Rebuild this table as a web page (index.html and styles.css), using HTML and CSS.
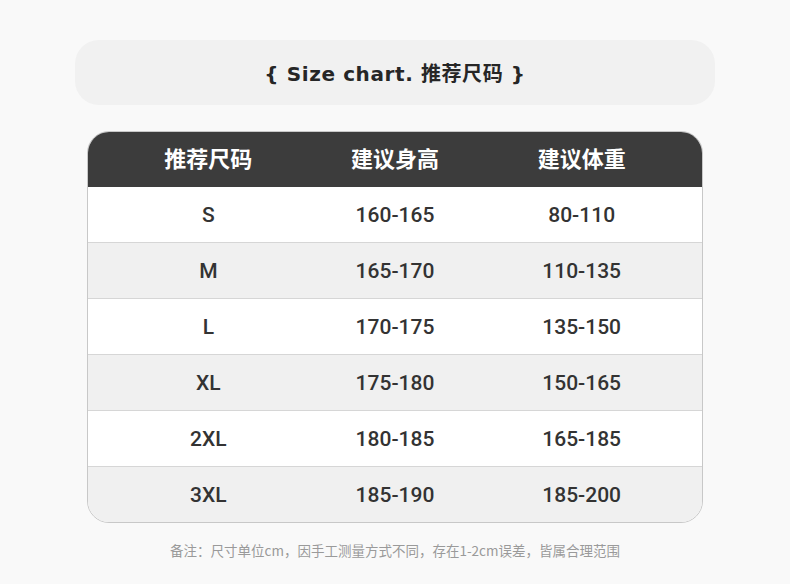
FILE: index.html
```html
<!DOCTYPE html>
<html lang="zh">
<head>
<meta charset="utf-8">
<title>Size chart</title>
<link rel="stylesheet" href="styles.css">
</head>
<body>
<div class="page">
  <div class="title-pill"><span class="title">{ Size chart. 推荐尺码 }</span></div>
  <div class="chart">
    <div class="row head">
      <div class="cell">推荐尺码</div>
      <div class="cell">建议身高</div>
      <div class="cell">建议体重</div>
    </div>
    <div class="row">
      <div class="cell">S</div><div class="cell">160-165</div><div class="cell">80-110</div>
    </div>
    <div class="row alt">
      <div class="cell">M</div><div class="cell">165-170</div><div class="cell">110-135</div>
    </div>
    <div class="row">
      <div class="cell">L</div><div class="cell">170-175</div><div class="cell">135-150</div>
    </div>
    <div class="row alt">
      <div class="cell">XL</div><div class="cell">175-180</div><div class="cell">150-165</div>
    </div>
    <div class="row">
      <div class="cell">2XL</div><div class="cell">180-185</div><div class="cell">165-185</div>
    </div>
    <div class="row alt last">
      <div class="cell">3XL</div><div class="cell">185-190</div><div class="cell">185-200</div>
    </div>
  </div>
  <p class="note">备注：尺寸单位cm，因手工测量方式不同，存在1-2cm误差，皆属合理范围</p>
</div>
</body>
</html>
```

FILE: styles.css
```css
html, body {
  margin: 0;
  padding: 0;
  background: #f9f9f9;
}
.page {
  width: 790px;
  height: 584px;
  padding-top: 40px;
  box-sizing: border-box;
  display: flex;
  flex-direction: column;
  align-items: center;
}
.title-pill {
  width: 640px;
  height: 65px;
  border-radius: 24px;
  background: #f1f1f1;
  display: flex;
  align-items: center;
  justify-content: center;
}
.title {
  font-family: "DejaVu Sans", "Noto Sans CJK SC", sans-serif;
  font-weight: bold;
  font-size: 20px;
  color: #262626;
  letter-spacing: 0.6px;
}
.chart {
  margin-top: 26px;
  width: 616px;
  border: 1px solid #c8c8c8;
  border-radius: 22px;
  overflow: hidden;
  box-sizing: border-box;
  background: #ffffff;
}
.row {
  display: grid;
  grid-template-columns: 1fr 1fr 1fr;
  padding: 0 27px;
  height: 55px;
  align-items: center;
  border-bottom: 1px solid #d6d6d6;
  background: #ffffff;
}
.row.alt {
  background: #f0f0f0;
}
.row.last {
  border-bottom: none;
}
.row.head {
  background: #3c3c3c;
  border-bottom: none;
  margin: -1px -1px 0;
  padding: 0 28px 4px;
  box-sizing: content-box;
  height: 52px;
}
.cell {
  text-align: center;
  font-family: Roboto, "Noto Sans CJK SC", sans-serif;
  font-weight: 500;
  font-size: 21px;
  color: #333333;
}
.head .cell {
  font-family: "Noto Sans CJK SC", sans-serif;
  font-weight: bold;
  font-size: 22px;
  color: #ffffff;
}
.note {
  margin: 17px 0 0;
  font-family: "Noto Sans CJK SC", sans-serif;
  font-size: 13.5px;
  color: #9a9a9a;
}
```
